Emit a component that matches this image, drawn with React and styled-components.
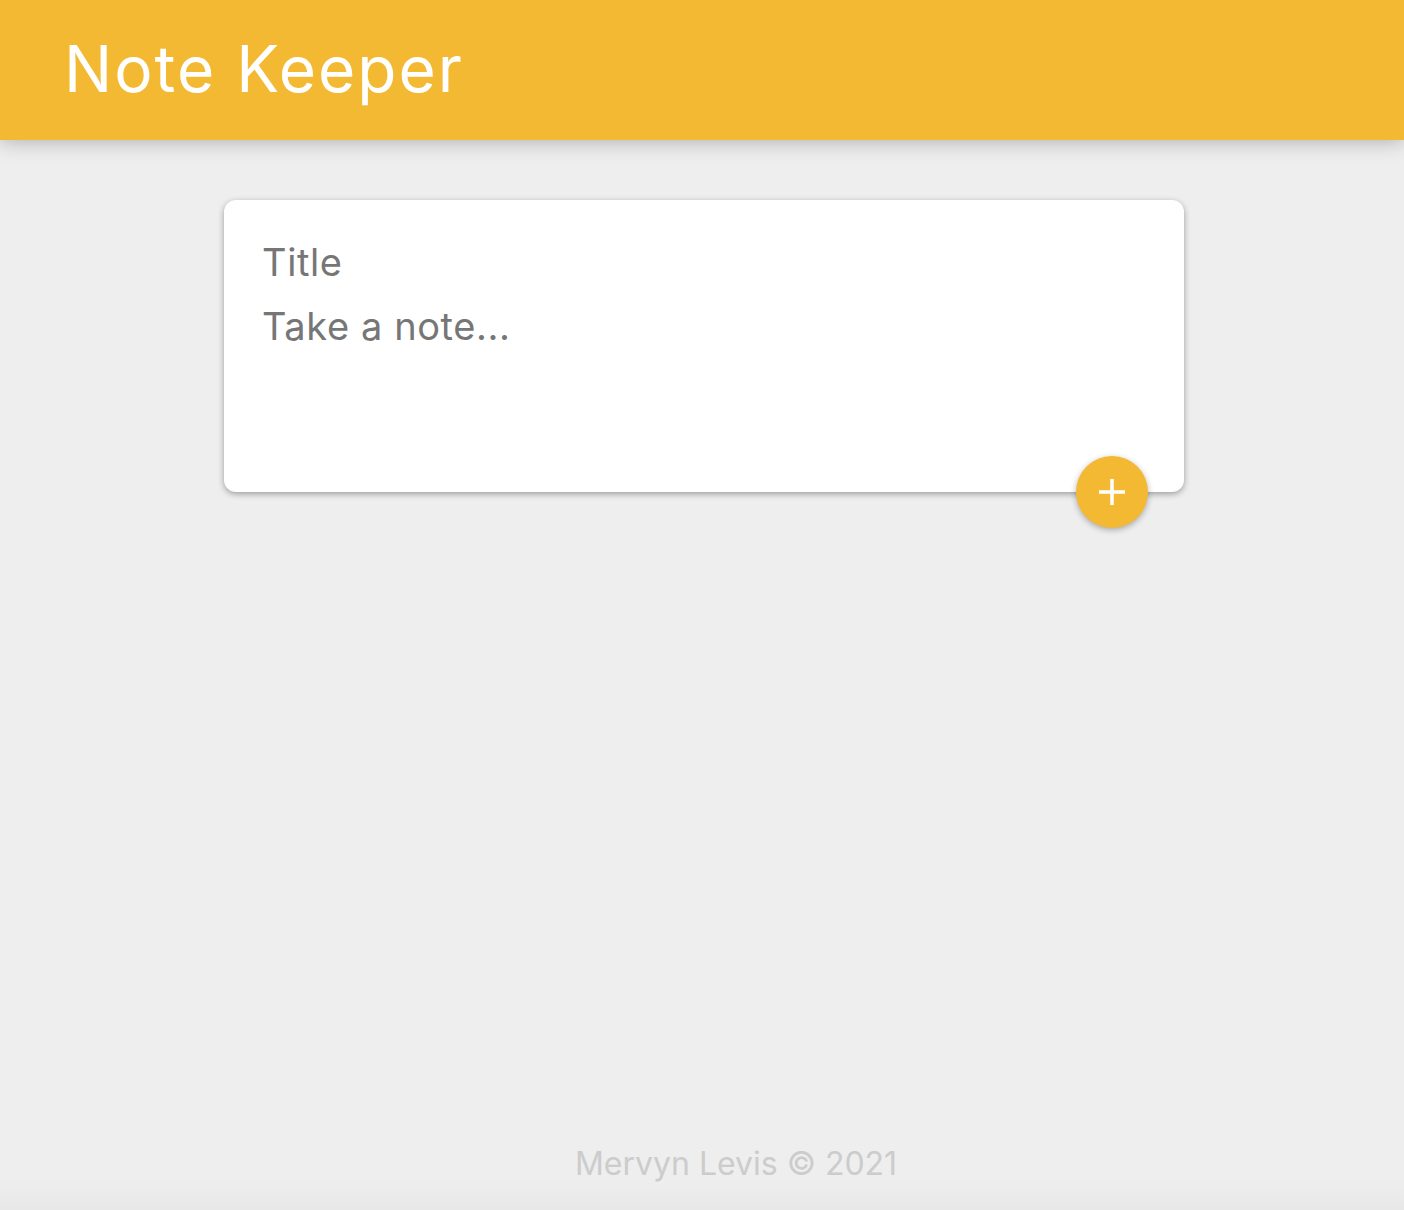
import styled, { createGlobalStyle } from "styled-components";

const GlobalStyle = createGlobalStyle`
  html, body {
    margin: 0;
    padding: 0;
  }
  body {
    background: #eeeeee;
    font-family: Inter, "Noto Sans", sans-serif;
  }
  * {
    box-sizing: border-box;
  }
`;

const Page = styled.div`
  min-height: 1210px;
  display: flex;
  flex-direction: column;
`;

const Header = styled.header`
  background-color: #f4b932;
  height: 140px;
  padding: 0 64px;
  display: flex;
  align-items: center;
  box-shadow: 0 0 20px rgba(0, 0, 0, 0.3);
  position: relative;
  z-index: 1;
`;

const Logo = styled.h1`
  margin: 0;
  color: #fff;
  font-size: 64px;
  font-weight: 400;
  letter-spacing: 2px;
  line-height: 1;
  margin-top: -2px;
`;

const Main = styled.main`
  flex: 1;
  display: flex;
  justify-content: center;
  padding-top: 60px;
  padding-left: 4px;
`;

const NoteForm = styled.form`
  position: relative;
  width: 960px;
  height: 292px;
  background: #fff;
  border-radius: 12px;
  box-shadow: 0 2px 6px rgba(0, 0, 0, 0.35);
  padding: 36px 38px;
  display: flex;
  flex-direction: column;
  gap: 12px;
`;

const Field = styled.input`
  border: none;
  outline: none;
  padding: 0;
  font-family: inherit;
  font-size: 38px;
  letter-spacing: 0.6px;
  line-height: 52px;
  color: #333;
  background: transparent;
  &::placeholder {
    color: #767676;
  }
`;

const Area = styled(Field).attrs({ as: "textarea" })`
  resize: none;
  height: 60px;
  overflow: hidden;
`;

const AddButton = styled.button`
  position: absolute;
  right: 36px;
  bottom: -36px;
  width: 72px;
  height: 72px;
  border-radius: 50%;
  border: none;
  background: #f4b932;
  box-shadow: 0 2px 6px rgba(0, 0, 0, 0.3);
  display: flex;
  align-items: center;
  justify-content: center;
  padding: 0;
  cursor: pointer;
`;

const Footer = styled.footer`
  height: 100px;
  display: flex;
  justify-content: center;
  align-items: flex-start;
  padding-top: 38px;
  padding-left: 68px;
  background: linear-gradient(to bottom, #eeeeee 70%, #e8e8e8 100%);
`;

const Copy = styled.p`
  margin: 0;
  color: #cccccc;
  font-size: 32px;
  line-height: 1;
`;

function App() {
  return (
    <Page>
      <GlobalStyle />
      <Header>
        <Logo>Note Keeper</Logo>
      </Header>
      <Main>
        <NoteForm onSubmit={(e) => e.preventDefault()}>
          <Field name="title" placeholder="Title" />
          <Area name="content" placeholder="Take a note..." rows={1} />
          <AddButton type="submit" aria-label="Add note">
            <svg width="30" height="30" viewBox="0 0 30 30">
              <path d="M15 2v26M2 15h26" stroke="#fff" strokeWidth="3.5" />
            </svg>
          </AddButton>
        </NoteForm>
      </Main>
      <Footer>
        <Copy>Mervyn Levis © 2021</Copy>
      </Footer>
    </Page>
  );
}

export default App;
